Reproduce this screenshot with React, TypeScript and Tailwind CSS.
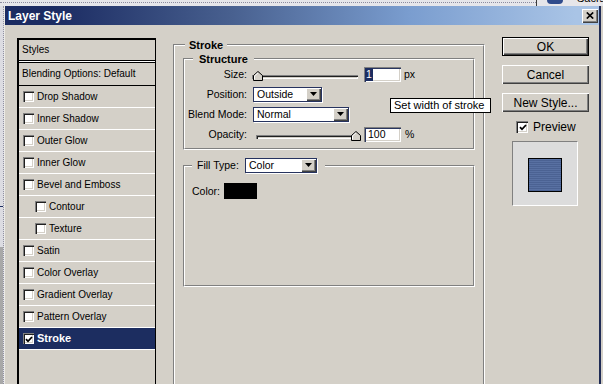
import React from "react";

const raised =
  "shadow-[inset_1px_1px_0_#ffffff,inset_-1px_-1px_0_#404040,inset_-2px_-2px_0_#808080]";
const sunken =
  "shadow-[inset_1px_1px_0_#808080,inset_2px_2px_0_#202020,inset_-1px_-1px_0_#ffffff,inset_-2px_-2px_0_#d4d0c8]";
const field =
  "shadow-[inset_1px_1px_0_#808080,inset_2px_2px_0_#2a3660,inset_-1px_-1px_0_#ffffff,inset_-2px_-2px_0_#d4d0c8]";

function Check({ on, big }: { on?: boolean; big?: boolean }) {
  return (
    <div
      className={`${big ? "w-[12px] h-[12px]" : "w-[11px] h-[11px]"} shrink-0 bg-white ${sunken} flex items-center justify-center`}
    >
      {on && (
        <svg width="8" height="7" viewBox="0 0 8 7" className="ml-[1px] mt-[1px]">
          <path d="M1 3.2 L3 5.3 L7 1" stroke="#000" strokeWidth="1.8" fill="none" />
        </svg>
      )}
    </div>
  );
}

function Btn({ label, def }: { label: string; def?: boolean }) {
  return (
    <div className={`h-[19px] w-full ${def ? "border border-black" : ""}`}>
      <div className={`h-full w-full bg-[#d4d0c8] ${raised} flex items-center justify-center text-[12px] leading-none`}>
        {label}
      </div>
    </div>
  );
}

function Group({ className, children }: { className: string; children: React.ReactNode }) {
  return (
    <div className={`border border-t-[#808080] border-l-[#808080] border-b-white border-r-white ${className}`}>
      <div className="h-full border border-t-white border-l-white border-b-[#808080] border-r-[#808080]">
        {children}
      </div>
    </div>
  );
}

function Select({ value, w }: { value: string; w: string }) {
  return (
    <div className={`${w} h-[15px] shrink-0 bg-white border border-[#27335f] shadow-[1px_1px_0_#ffffff] flex items-center`}>
      <span className="flex-1 pl-[3px] text-[10.5px] leading-none">{value}</span>
      <div className={`w-[15px] h-[13px] bg-[#d4d0c8] ${raised} flex items-center justify-center`}>
        <svg width="7" height="4" viewBox="0 0 7 4" className="-mt-[1px]">
          <path d="M0 0 H7 L3.5 4 Z" fill="#000" />
        </svg>
      </div>
    </div>
  );
}

function Slider({ w, right }: { w: string; right?: boolean }) {
  return (
    <div className={`${w} h-[15px] shrink-0`}>
      <div className="relative mt-[8px] h-[4px] bg-[#d4d0c8] shadow-[inset_1px_1px_0_#808080,inset_2px_2px_0_#202020,inset_-1px_-1px_0_#ffffff]">
        <svg
          width="10"
          height="10"
          viewBox="0 0 10 10"
          className={`absolute -top-[4px] ${right ? "right-[-1px]" : "left-[1px]"}`}
        >
          <path d="M0.5 9.5 V4.5 L5 0.5 L9.5 4.5 V9.5 Z" fill="#d4d0c8" stroke="#000" />
          <path d="M1.5 8.5 V5 L5 1.8" stroke="#fff" fill="none" />
        </svg>
      </div>
    </div>
  );
}

const effects = [
  { label: "Drop Shadow" },
  { label: "Inner Shadow" },
  { label: "Outer Glow" },
  { label: "Inner Glow" },
  { label: "Bevel and Emboss" },
  { label: "Contour", indent: true },
  { label: "Texture", indent: true },
  { label: "Satin" },
  { label: "Color Overlay" },
  { label: "Gradient Overlay" },
  { label: "Pattern Overlay" },
  { label: "Stroke", on: true },
];

export default function App() {
  return (
    <div className="relative w-[603px] h-[384px] overflow-hidden bg-[#d4d0c8] font-['Liberation_Sans',Arial,sans-serif] text-black flex flex-col">
      {/* desktop strip behind the dialog */}
      <div className="h-[6px] shrink-0 flex bg-[#e6e6ea]">
        <div className="flex-1 mt-[2px] h-[2px] border-t border-dotted border-[#8c8ca0]" />
        <div className="w-[1px] bg-[#3a3a3a]" />
        <div className="w-[10px]" />
        <div className="w-[16px] h-[4px] rounded-b-full bg-[#2f4b8c]" />
        <div className="w-[14px]" />
        <span className="-mt-[7px] text-[11px] leading-[11px] w-[26px] overflow-hidden">Sacrs</span>
      </div>

      <div className="flex flex-1 min-h-0">
        <div className="w-[4px] shrink-0 flex flex-col bg-[#dcdce2] border-r border-dotted border-[#9090a0]">
          <div className="h-[200px]" />
          <div className="h-[1px] bg-[#1f2f62]" />
          <div className="flex-1 mt-[40px] bg-[#a8a8a8]" />
        </div>

        {/* dialog */}
        <div className="w-[597px] shrink-0 flex flex-col border-l border-[#ecebe6] border-r-2 border-r-[#1f2b55]">
          <div className="h-[19px] shrink-0 flex items-center bg-[linear-gradient(to_right,#1b2b62_8%,#48608f_38%,#7a9dcf_68%,#a9c4e6_96%)]">
            <span className="pl-[3px] flex-1 text-white font-bold text-[12px] leading-none">Layer Style</span>
            <div className={`w-[16px] h-[14px] mr-[1px] bg-[#d4d0c8] ${raised} flex items-center justify-center`}>
              <svg width="8" height="7" viewBox="0 0 8 7">
                <path d="M0.8 0.5 L7.2 6.5 M7.2 0.5 L0.8 6.5" stroke="#000" strokeWidth="1.7" />
              </svg>
            </div>
          </div>

          <div className="flex-1 flex pl-[12px] pt-[13px]">
            {/* styles list */}
            <div className="w-[139px] h-[400px] shrink-0 border-t-2 border-l-2 border-r border-black text-[10px]">
              <div className="h-[21px] border-b border-black flex items-center pl-[3px] leading-none">Styles</div>
              <div className="h-[1px] bg-white" />
              <div className="h-[24px] border-y border-black flex items-center pl-[3px] leading-none">
                Blending Options: Default
              </div>
              {effects.map((e) => (
                <div
                  key={e.label}
                  className={`h-[22px] border-b border-white flex items-center leading-none ${e.indent ? "pl-[16px]" : "pl-[4px]"} ${e.on ? "bg-[#1c2d60] text-white font-bold text-[11px]" : ""}`}
                >
                  <Check on={e.on} />
                  <span className="ml-[3px]">{e.label}</span>
                </div>
              ))}
            </div>

            {/* stroke panel */}
            <Group className="ml-[17px] mt-[6px] w-[312px] h-[400px] shrink-0">
              <div className="ml-[10px] -mt-[8px] h-[14px] w-fit px-[4px] bg-[#d4d0c8] flex items-center font-bold text-[11px] leading-none">
                Stroke
              </div>

              <Group className="mx-[8px] mt-[6px] h-[92px]">
                <div className="ml-[8px] -mt-[8px] h-[14px] w-fit px-[6px] bg-[#d4d0c8] flex items-center font-bold text-[11px] leading-none">
                  Structure
                </div>
                <div className="mt-[1px] flex flex-col gap-[5px] text-[10.5px] leading-none">
                  <div className="h-[15px] flex items-center">
                    <span className="w-[62px] text-right">Size:</span>
                    <Slider w="ml-[5px] w-[106px]" />
                    <div className={`ml-[6px] w-[37px] h-[15px] bg-white ${field} flex items-center pl-[1px]`}>
                      <span className="w-[8px] h-[13px] bg-[#1c2d60] text-white flex items-center justify-center">1</span>
                    </div>
                    <span className="ml-[3px]">px</span>
                  </div>
                  <div className="h-[15px] flex items-center">
                    <span className="w-[62px] text-right">Position:</span>
                    <div className="ml-[6px]">
                      <Select value="Outside" w="w-[69px]" />
                    </div>
                  </div>
                  <div className="h-[15px] flex items-center">
                    <span className="w-[62px] text-right">Blend Mode:</span>
                    <div className="ml-[6px]">
                      <Select value="Normal" w="w-[96px]" />
                    </div>
                  </div>
                  <div className="h-[15px] flex items-center">
                    <span className="w-[62px] text-right">Opacity:</span>
                    <Slider w="ml-[9px] w-[104px]" right />
                    <div className={`ml-[4px] w-[37px] h-[15px] bg-white ${field} flex items-center pl-[4px]`}>
                      100
                    </div>
                    <span className="ml-[4px]">%</span>
                  </div>
                </div>
              </Group>

              <Group className="mx-[8px] mt-[15px] h-[122px]">
                <div className="ml-[7px] -mt-[9px] h-[15px] w-fit pl-[5px] pr-[8px] bg-[#d4d0c8] flex items-center text-[10.5px] leading-none">
                  <span className="w-[48px]">Fill Type:</span>
                  <Select value="Color" w="w-[72px]" />
                </div>
                <div className="mt-[10px] ml-[7px] h-[16px] flex items-center text-[10.5px] leading-none">
                  <span className="w-[32px]">Color:</span>
                  <div className="w-[33px] h-[16px] bg-black" />
                </div>
              </Group>
            </Group>

            {/* buttons */}
            <div className="ml-[17px] -mt-[1px] w-[87px] shrink-0 flex flex-col">
              <Btn label="OK" def />
              <div className="mt-[9px]">
                <Btn label="Cancel" />
              </div>
              <div className="mt-[9px]">
                <Btn label="New Style..." />
              </div>
              <div className="mt-[9px] h-[12px] pl-[14px] flex items-center">
                <Check on big />
                <span className="ml-[5px] text-[12px] leading-none">Preview</span>
              </div>
              <div className="mt-[8px] ml-[10px] w-[66px] h-[65px] bg-[#dcdcdc] border border-t-[#808080] border-l-[#808080] border-b-white border-r-white flex items-center justify-center">
                <div className="w-[34px] h-[34px] mt-[2px] border border-black bg-[repeating-linear-gradient(0deg,#4b6293_0px,#4b6293_1px,#5870a2_1px,#5870a2_2px)]" />
              </div>
            </div>
          </div>
        </div>
      </div>

      {/* tooltip */}
      <div className="absolute left-[390px] top-[98px] w-[101px] h-[15px] bg-white border border-black flex items-center pl-[3px] text-[11px] leading-none">
        Set width of stroke
      </div>
    </div>
  );
}
